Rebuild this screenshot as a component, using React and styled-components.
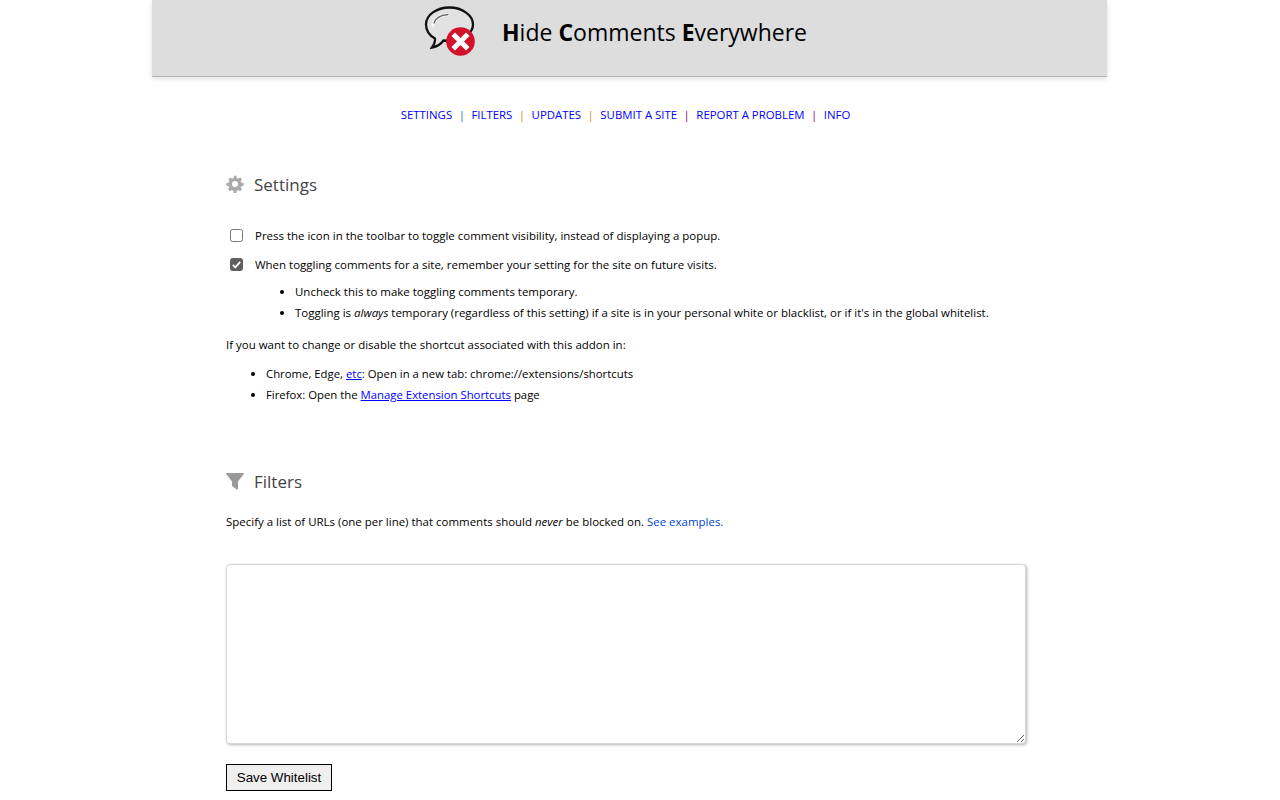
import React from 'react';
import styled, { createGlobalStyle } from 'styled-components';

const Global = createGlobalStyle`
  html, body { margin: 0; padding: 0; background: #fff; overflow: hidden; height: 800px; }
  body { font-family: "Open Sans", "Noto Sans", sans-serif; color: #000; }
`;
const Page = styled.div`
  width: 955px;
  margin-left: 152px;
`;
const Header = styled.header`
  height: 76px;
  background: #dddddd;
  border-bottom: 1px solid #b4b4b4;
  box-shadow: 0 2px 5px rgba(0,0,0,.12);
  display: flex;
  align-items: flex-start;
  padding-left: 272px;
  box-sizing: content-box;
`;
const Logo = styled.svg`
  width: 54px;
  height: 52px;
  margin-top: 5px;
  flex: none;
`;
const Title = styled.h1`
  margin: 16px 0 0 24px;
  font-size: 23px;
  line-height: 32px;
  font-weight: 400;
  white-space: nowrap;
  color: #000;
  b { font-weight: 700; }
`;
const Nav = styled.nav`
  display: flex;
  justify-content: center;
  gap: 6.5px;
  margin-top: 29px;
  padding-right: 8px;
  font-size: 11.4px;
  line-height: 18px;
  height: 18px;
`;
const NavLink = styled.a`
  color: #0000ff;
  text-transform: uppercase;
  text-decoration: none;
`;
const Sep = styled.span`
  color: ${p => p.$c};
`;
const Main = styled.main`
  padding-left: 74px;
  width: 800px;
`;
const Heading = styled.h2`
  display: flex;
  align-items: center;
  margin: ${p => p.$top} 0 0;
  height: 28px;
  font-size: 17px;
  font-weight: 400;
  color: #444;
  gap: 10px;
`;
const IconBox = styled.span`
  width: 18px;
  height: 18px;
  display: flex;
`;
const CheckRow = styled.label`
  display: flex;
  align-items: center;
  height: 18px;
  font-size: 11.47px;
  margin-top: ${p => p.$top};
  padding-left: 4px;
  color: #000;
`;
const Box = styled.span`
  width: 13px;
  height: 13px;
  border-radius: 2.5px;
  box-sizing: border-box;
  border: 1px solid ${p => (p.$checked ? '#5f5f5f' : '#767676')};
  background: ${p => (p.$checked ? '#5f5f5f' : '#fff')};
  margin-right: 12px;
  display: flex;
  align-items: center;
  justify-content: center;
  flex: none;
`;
const List = styled.ul`
  margin: ${p => p.$top} 0 0;
  padding-left: ${p => p.$left};
  font-size: ${p => p.$size};
  color: #000;
  li { line-height: 21px; height: 21px; white-space: nowrap; }
  a { color: #0000ff; }
`;
const Para = styled.p`
  margin: ${p => p.$top} 0 0;
  font-size: 11.47px;
  line-height: 18px;
  color: #000;
  a { color: #0045d0; text-decoration: none; }
`;
const Area = styled.textarea`
  display: block;
  box-sizing: border-box;
  width: 800px;
  height: 180px;
  margin-top: 33px;
  border: 1px solid #d6d6d6;
  border-radius: 4px;
  box-shadow: 1px 1px 3px rgba(0,0,0,.3);
  outline: none;
  background: #fff;
  resize: vertical;
`;
const Save = styled.button`
  display: block;
  box-sizing: border-box;
  margin-top: 20px;
  width: 106px;
  height: 27px;
  padding: 0;
  border: 1px solid #000;
  background: #efefef;
  font-family: "Liberation Sans", Arial, sans-serif;
  font-size: 13.33px;
  color: #000;
`;

const links = ['Settings', 'Filters', 'Updates', 'Submit a site', 'Report a problem', 'Info'];
const sepColors = ['#2f6fb0', '#c98a35', '#c98a35', '#800080', '#800080'];

export default function App() {
  return (
    <Page>
      <Global />
      <Header>
        <Logo viewBox="0 0 54 52">
          <path d="M25.500 2.500C12.500 2.500 2 10 2 19.500c0 6 3.500 11 9 14 .5 3-1 6-3 9 5-1 9-3.500 11.500-7 2 .4 4 .5 6 .5 13 0 23.500-7.500 23.500-16.500S38.500 2.500 25.500 2.500z" fill="#e2e2e2" stroke="#111" strokeWidth="2.300" />
          <path d="M9 21c.5-7 7-11 15-11.500" fill="none" stroke="#f6f6f6" strokeWidth="3" strokeLinecap="round" />
          <path d="M10 18c1.500-5 7-8 14-8.500" fill="none" stroke="#666" strokeWidth="1.300" strokeLinecap="round" />
          <circle cx="36.500" cy="36.500" r="14.300" fill="#d2112a" />
          <path d="M31 31l11 11M42 31l-11 11" stroke="#fff" strokeWidth="5" strokeLinecap="square" />
        </Logo>
        <Title><b>H</b>ide <b>C</b>omments <b>E</b>verywhere</Title>
      </Header>
      <Nav>
        {links.map((l, i) => (
          <React.Fragment key={l}>
            <NavLink href="#">{l}</NavLink>
            {i < 5 && <Sep $c={sepColors[i]}>|</Sep>}
          </React.Fragment>
        ))}
      </Nav>
      <Main>
        <Heading $top="46px">
          <IconBox>
            <svg viewBox="0 0 24 24" width="18" height="18"><path fill="#aaa" fillRule="evenodd" d="M13.800 1l.5 3c.7.2 1.400.5 2 .9l2.500-1.700 2.500 2.500-1.700 2.500c.4.600.7 1.300.9 2l3 .5v3.600l-3 .5c-.2.700-.5 1.400-.9 2l1.700 2.500-2.500 2.500-2.500-1.700c-.6.4-1.300.7-2 .9l-.5 3h-3.600l-.5-3c-.7-.2-1.400-.5-2-.9l-2.500 1.700-2.500-2.500 1.700-2.500c-.4-.6-.7-1.300-.9-2l-3-.5v-3.600l3-.5c.2-.7.500-1.400.9-2L3.200 5.700l2.500-2.500 2.500 1.700c.6-.4 1.300-.7 2-.9l.5-3h3.600zM12 8a4 4 0 100 8 4 4 0 000-8z" /></svg>
          </IconBox>
          Settings
        </Heading>
        <CheckRow $top="28px"><Box />Press the icon in the toolbar to toggle comment visibility, instead of displaying a popup.</CheckRow>
        <CheckRow $top="11px">
          <Box $checked>
            <svg viewBox="0 0 12 12" width="11" height="11"><path d="M2 6.500l2.700 2.700L10 3.200" fill="none" stroke="#fff" strokeWidth="2" /></svg>
          </Box>
          When toggling comments for a site, remember your setting for the site on future visits.
        </CheckRow>
        <List $top="8px" $left="69px" $size="11.47px">
          <li>Uncheck this to make toggling comments temporary.</li>
          <li>Toggling is <i>always</i> temporary (regardless of this setting) if a site is in your personal white or blacklist, or if it's in the global whitelist.</li>
        </List>
        <Para $top="13px">If you want to change or disable the shortcut associated with this addon in:</Para>
        <List $top="9px" $left="40px" $size="11.35px">
          <li>Chrome, Edge, <a href="#">etc</a>: Open in a new tab: chrome://extensions/shortcuts</li>
          <li>Firefox: Open the <a href="#">Manage Extension Shortcuts</a> page</li>
        </List>
        <Heading $top="62px">
          <IconBox>
            <svg viewBox="0 -1 18 18" width="18" height="18"><path fill="#999" d="M.5 0h17a.5.500 0 01.4.800L12 8.500V15.500a1 1 0 01-1.600.8L6.800 13.500A1 1 0 016 12.700V8.500L.1.800A.5.500 0 01.5 0z" /></svg>
          </IconBox>
          Filters
        </Heading>
        <Para $top="18px">Specify a list of URLs (one per line) that comments should <i>never</i> be blocked on. <a href="#">See examples.</a></Para>
        <Area />
        <Save>Save Whitelist</Save>
      </Main>
    </Page>
  );
}
